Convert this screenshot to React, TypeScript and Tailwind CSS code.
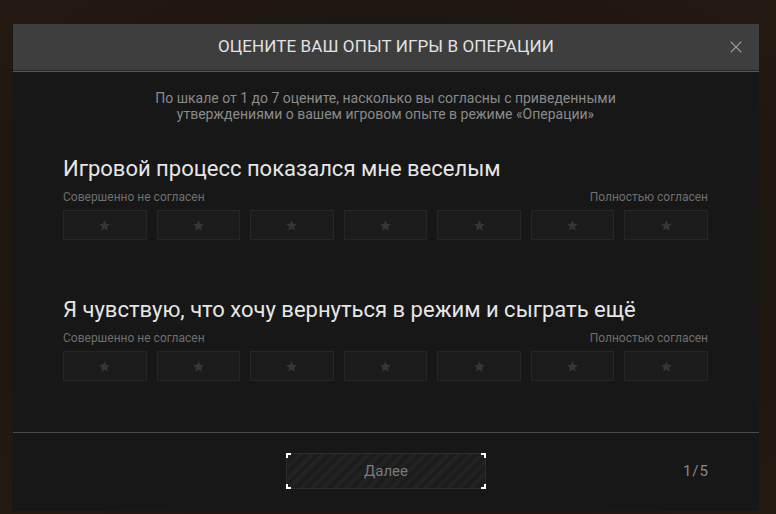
import { X } from "lucide-react";

const questions = [
  "Игровой процесс показался мне веселым",
  "Я чувствую, что хочу вернуться в режим и сыграть ещё",
];

function Star() {
  return (
    <svg width="13" height="13" viewBox="0 0 24 24" fill="#363636">
      <path d="M12 2l2.9 6.9 7.1.6-5.4 4.7 1.7 7.3L12 17.6 5.7 21.5l1.7-7.3L2 9.5l7.1-.6z" />
    </svg>
  );
}

function Question({ title, first }: { title: string; first?: boolean }) {
  return (
    <div className={first ? "mt-[33px]" : "mt-[56px]"}>
      <h2 className="text-[22px] leading-[28px] text-[#e6e6e6]">{title}</h2>
      <div className="mt-[6px] flex justify-between text-[12px] leading-[16px] text-[#6e6e6e]">
        <span>Совершенно не согласен</span>
        <span>Полностью согласен</span>
      </div>
      <div className="mt-[5px] grid grid-cols-7 gap-[10px]">
        {[1, 2, 3, 4, 5, 6, 7].map((n) => (
          <div
            key={n}
            className="flex h-[30px] items-center justify-center border border-[#262626] bg-[#1b1b1b]"
          >
            <Star />
          </div>
        ))}
      </div>
    </div>
  );
}

export default function App() {
  return (
    <div
      className="h-[514px] w-[776px] overflow-hidden bg-[radial-gradient(ellipse_at_center,#1a1612_0%,#1d1610_60%,#241a10_100%)] pl-[12px] pt-[24px]"
      style={{ fontFamily: "Roboto, 'Noto Sans', sans-serif" }}
    >
      <div className="flex h-[487px] w-[747px] flex-col bg-[#171717]">
        {/* Header */}
        <div className="relative ml-[1px] flex h-[46px] items-center justify-center bg-[#3e3e3e]">
          <span className="text-[17px] uppercase tracking-[0.1px] text-[#e2e2e2]">
            Оцените ваш опыт игры в операции
          </span>
          <X
            size={20}
            strokeWidth={1.3}
            className="absolute right-[13px] top-[13px] text-[#999999]"
          />
        </div>
        <div className="ml-[1px] h-[1px] bg-[#262626]" />
        <div className="ml-[1px] h-[1px] bg-[#5a5a5a]" />

        {/* Body */}
        <div className="w-[645px] self-center">
          <p className="mt-[18px] text-center text-[14px] leading-[16px] text-[#8a8a8a]">
            По шкале от 1 до 7 оцените, насколько вы согласны с приведенными
            <br />
            утверждениями о вашем игровом опыте в режиме «Операции»
          </p>
          {questions.map((q, i) => (
            <Question key={q} title={q} first={i === 0} />
          ))}
        </div>

        {/* Footer */}
        <div className="ml-[1px] mt-[51px] h-[1px] bg-[#4a4a4a]" />
        <div className="relative mt-[20px] flex h-[36px] items-center">
          <div className="relative ml-[274px] flex h-[36px] w-[200px] items-center justify-center border border-[#2c2c2c] bg-[repeating-linear-gradient(135deg,#222222_0px,#222222_4px,#1c1c1c_4px,#1c1c1c_8px)]">
            <span className="text-[15px] text-[#7a7a7a]">Далее</span>
            <span className="absolute -left-px -top-px h-[5px] w-[5px] border-l-2 border-t-2 border-white" />
            <span className="absolute -right-px -top-px h-[5px] w-[5px] border-r-2 border-t-2 border-white" />
            <span className="absolute -bottom-px -left-px h-[5px] w-[5px] border-b-2 border-l-2 border-white" />
            <span className="absolute -bottom-px -right-px h-[5px] w-[5px] border-b-2 border-r-2 border-white" />
          </div>
          <span className="ml-auto mr-[50px] text-[15px] tracking-[1px] text-[#8a8a8a]">1/5</span>
        </div>
      </div>
    </div>
  );
}
